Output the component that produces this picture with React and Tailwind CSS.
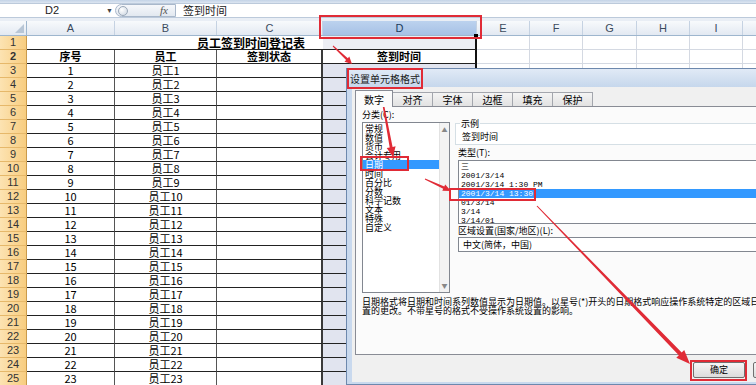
import React from "react";

const cjk = "font-['Noto_Sans_CJK_SC','Noto_Sans',sans-serif]";

const colW = ["w-[88px]", "w-[102px]", "w-[106px]", "w-[154px]", "w-[53px]", "w-[53px]", "w-[54px]", "w-[53px]", "w-[53px]", "w-[40px]"];
const letters = ["A", "B", "C", "D", "E", "F", "G", "H", "I", ""];
const rest = [4, 5, 6, 7, 8, 9];

const categories = ["常规", "数值", "货币", "会计专用", "日期", "时间", "百分比", "分数", "科学记数", "文本", "特殊", "自定义"];
const types = ["三", "2001/3/14", "2001/3/14 1:30 PM", "2001/3/14 13:30", "01/3/14", "3/14", "3/14/01"];
const tabs = ["数字", "对齐", "字体", "边框", "填充", "保护"];

function arrowPoly(x1, y1, x2, y2, w0, w1, hl, hw) {
  const dx = x2 - x1, dy = y2 - y1;
  const len = Math.hypot(dx, dy);
  const ux = dx / len, uy = dy / len;
  const nx = -uy, ny = ux;
  const bx = x2 - ux * hl, by = y2 - uy * hl;
  const p = (x, y) => `${x.toFixed(1)},${y.toFixed(1)}`;
  return [
    p(x1 + (nx * w0) / 2, y1 + (ny * w0) / 2),
    p(bx + (nx * w1) / 2, by + (ny * w1) / 2),
    p(bx + (nx * hw) / 2, by + (ny * hw) / 2),
    p(x2, y2),
    p(bx - (nx * hw) / 2, by - (ny * hw) / 2),
    p(bx - (nx * w1) / 2, by - (ny * w1) / 2),
    p(x1 - (nx * w0) / 2, y1 - (ny * w0) / 2),
  ].join(" ");
}

function RowHead({ n }) {
  return (
    <div className="w-[27px] shrink-0 flex items-center justify-center bg-[linear-gradient(to_right,#fce3b2,#f8cd80)] border-b border-r border-b-[#e6b86a] border-r-[#c99a4c] text-[11px] text-[#333] font-['Liberation_Sans',sans-serif]">
      {n}
    </div>
  );
}

function LightCells() {
  return rest.map((i) => (
    <div key={i} className={`${colW[i]} shrink-0 border-b border-r border-[#d4d9e2]`} />
  ));
}

function FormulaBar() {
  return (
    <div className="h-[21px] flex flex-col bg-[#dde6f1]">
      <div className="h-[3px] bg-[linear-gradient(#c3d3e7,#dde6f1)]" />
      <div className="h-[15px] flex bg-white border-y border-[#bccadb]">
        <div className="w-[115px] shrink-0 relative text-[11px] leading-[13px] font-['Liberation_Sans',sans-serif] text-[#222]">
          <span className="absolute left-[45px] top-0">D2</span>
          <span className="absolute left-[106px] top-[0px] text-[7px] text-[#444]">▼</span>
        </div>
        <div className="w-[61px] shrink-0 flex items-center rounded-l-full border border-[#a9b8cb] bg-[linear-gradient(#f6f8fb,#e2e8f0)]">
          <span className="ml-[2px] w-[10px] h-[10px] rounded-full border border-[#9aa8b8] bg-[radial-gradient(circle_at_35%_35%,#ffffff,#c9d3df)]" />
          <span className="ml-auto mr-[7px] italic font-['Liberation_Serif',serif] text-[11px] leading-[11px] text-[#555]">fx</span>
        </div>
        <div className={`flex-1 pl-[7px] text-[11px] leading-[13px] text-[#222] ${cjk}`}>签到时间</div>
      </div>
      <div className="h-[3px] bg-[#e9eef5]" />
    </div>
  );
}

function ColumnHeader() {
  return (
    <div className="flex h-[15px] border-b border-[#9eb6ce]">
      <div className="w-[27px] shrink-0 relative bg-[linear-gradient(#f8fafc,#e3e9f2)] border-r border-[#9eb6ce]">
        <div className="absolute right-[2px] bottom-[2px] w-0 h-0 border-l-[9px] border-l-transparent border-b-[9px] border-b-[#b8c6d6]" />
      </div>
      {letters.map((l, i) => (
        <div
          key={i}
          className={`${colW[i]} shrink-0 flex items-center justify-center border-r border-[#c5d2e2] text-[11px] font-['Liberation_Sans',sans-serif] ${
            l === "D" ? "bg-[linear-gradient(#bcd2ee,#a6c1e6)] text-[#203a5c]" : "bg-[linear-gradient(#f8fafc,#e3e9f2)] text-[#3b4a5d]"
          }`}
        >
          {l}
        </div>
      ))}
    </div>
  );
}

function Sheet() {
  const rows = [];
  for (let i = 3; i <= 25; i++) {
    rows.push(
      <div key={i} className="flex h-[14px]">
        <RowHead n={i} />
        <div className="w-[88px] shrink-0 flex items-center justify-center border-b border-r border-b-[#222] border-r-[#555]">{i - 2}</div>
        <div className="w-[102px] shrink-0 flex items-center justify-center border-b border-r border-b-[#222] border-r-[#555]">员工{i - 2}</div>
        <div className="w-[106px] shrink-0 border-b border-r-2 border-b-[#222] border-r-[#3a3a3a]" />
        <div className="w-[154px] shrink-0 bg-[#e1e4ef] border-b border-r-2 border-b-[#222] border-r-[#111]" />
        <LightCells />
      </div>
    );
  }
  return (
    <div className={`text-[11px] leading-[13px] text-black ${cjk}`}>
      <div className="flex h-[14px]">
        <RowHead n={1} />
        <div className="w-[450px] shrink-0 flex items-center justify-center font-bold text-[12px] border-b border-r-2 border-b-[#222] border-r-[#111] bg-[linear-gradient(to_right,#ffffff_296px,#eceef4_296px)]">
          员工签到时间登记表
        </div>
        <LightCells />
      </div>
      <div className="flex h-[14px] font-bold">
        <RowHead n={2} />
        <div className="w-[88px] shrink-0 flex items-center justify-center border-b border-r border-b-[#222] border-r-[#555]">序号</div>
        <div className="w-[102px] shrink-0 flex items-center justify-center border-b border-r border-b-[#222] border-r-[#555]">员工</div>
        <div className="w-[106px] shrink-0 flex items-center justify-center border-b border-r-2 border-b-[#222] border-r-[#3a3a3a]">签到状态</div>
        <div className="w-[154px] shrink-0 flex items-center justify-center bg-white border-b border-r-2 border-b-[#222] border-r-[#111]">签到时间</div>
        <LightCells />
      </div>
      {rows}
    </div>
  );
}

function Dialog() {
  return (
    <div className={`absolute left-[346px] top-[68px] w-[430px] h-[317px] border border-[#6d88ad] bg-[#c9d9ee] ${cjk} text-[9px] text-black`}>
      <div className="h-[18px] bg-[linear-gradient(#e1eaf6,#c6d7ec)] flex items-center pl-[3px] text-[10px] text-[#1a1a1a]">设置单元格格式</div>
      <div className="ml-[5px] h-[295px] bg-[#f0f0f0] pt-[3px] pl-[3px]">
        <div className="flex items-end h-[16px]">
          {tabs.map((t, i) =>
            i === 0 ? (
              <div key={t} className="w-[38px] h-[17px] relative z-10 -mb-px bg-[#fbfbfb] border border-b-0 border-[#898c95] flex items-center justify-center text-[10px]">
                {t}
              </div>
            ) : (
              <div key={t} className="w-[40px] h-[14px] border border-l-0 border-b-0 border-[#a3a6ad] bg-[linear-gradient(#f4f4f4,#e2e2e2)] flex items-center justify-center text-[10px]">
                {t}
              </div>
            )
          )}
        </div>
        <div className="w-[420px] h-[249px] border border-[#898c95] bg-[#fbfbfb] pt-[3px] pl-[6px]">
          <div className="flex">
            <div className="w-[88px] shrink-0">
              <div className="leading-[9px]">分类(C):</div>
              <div className="mt-[3px] h-[171px] border border-[#828790] bg-white flex">
                <div className="flex-1 pt-px">
                  {categories.map((c, i) => (
                    <div key={c} className={`h-[9px] leading-[9px] pl-[2px] ${i === 4 ? "bg-[#3399ff] text-white" : ""}`}>
                      {c}
                    </div>
                  ))}
                </div>
                <div className="w-[10px] bg-[#f3f3f3] border-l border-[#e2e2e2] flex flex-col justify-between items-center text-[6px] text-[#888] py-[2px]">
                  <span>▲</span>
                  <span>▼</span>
                </div>
              </div>
            </div>
            <div className="ml-[5px] flex-1">
              <div className="relative mt-[13px] h-[22px] border-t border-l border-b border-[#d5dfe5] bg-white">
                <span className="absolute -top-[5px] left-[4px] bg-[#fbfbfb] px-px leading-[9px]">示例</span>
                <div className="pt-[8px] pl-[6px] leading-[9px]">签到时间</div>
              </div>
              <div className="mt-[3px] pl-[3px] leading-[9px]">类型(T):</div>
              <div className="mt-[3px] ml-[3px] h-[64px] border border-[#828790] bg-white pt-px font-['Liberation_Mono','Noto_Sans_CJK_SC',monospace] text-[8px]">
                {types.map((t, i) => (
                  <div key={t} className={`h-[9px] leading-[9px] pl-[2px] ${i === 3 ? "bg-[#3399ff] text-white" : ""}`}>
                    {t}
                  </div>
                ))}
              </div>
              <div className="mt-[2px] pl-[3px] leading-[9px]">区域设置(国家/地区)(L):</div>
              <div className="mt-[2px] ml-[3px] h-[15px] border border-[#828790] bg-white pl-[4px] leading-[13px]">中文(简体，中国)</div>
            </div>
          </div>
          <div className="mt-[4px] leading-[9px] whitespace-nowrap">
            <div>日期格式将日期和时间系列数值显示为日期值。以星号(*)开头的日期格式响应操作系统特定的区域日期和时间设</div>
            <div>置的更改。不带星号的格式不受操作系统设置的影响。</div>
          </div>
        </div>
        <div className="mt-[7px] flex gap-[8px] pl-[338px]">
          <div className="w-[52px] h-[16px] shrink-0 rounded-[2px] border border-[#707070] bg-[linear-gradient(#f6f6f6,#dcdcdc)] flex items-center justify-center">确定</div>
          <div className="w-[52px] h-[16px] shrink-0 rounded-[2px] border border-[#707070] bg-[linear-gradient(#f6f6f6,#dcdcdc)] flex items-center justify-center">取消</div>
        </div>
      </div>
    </div>
  );
}

function Marks() {
  const red = "#e02b36";
  return (
    <svg className="absolute left-0 top-0 pointer-events-none" width="756" height="385">
      <g fill="none" stroke={red} strokeWidth="2">
        <rect x="320" y="16" width="161" height="22" />
        <rect x="348" y="69" width="74" height="19" />
        <rect x="361" y="157" width="47" height="13" />
        <rect x="450" y="189" width="85" height="11" />
        <rect x="691" y="361" width="55" height="19" />
      </g>
      <g fill={red}>
        <polygon points={arrowPoly(333, 46, 352, 64, 1, 2.5, 7, 7)} />
        <polygon points={arrowPoly(382, 98, 393, 157, 1.5, 3, 10, 9)} />
        <polygon points={arrowPoly(425, 179, 451, 191, 1, 2.5, 8, 7)} />
        <polygon points={arrowPoly(537, 206, 690, 364, 1, 4, 14, 11)} />
      </g>
    </svg>
  );
}

export default function App() {
  return (
    <div className="relative w-[756px] h-[385px] overflow-hidden bg-white">
      <FormulaBar />
      <ColumnHeader />
      <Sheet />
      <div className="absolute left-[474px] top-[34px] w-[4px] h-[4px] bg-black" />
      <Dialog />
      <Marks />
    </div>
  );
}
